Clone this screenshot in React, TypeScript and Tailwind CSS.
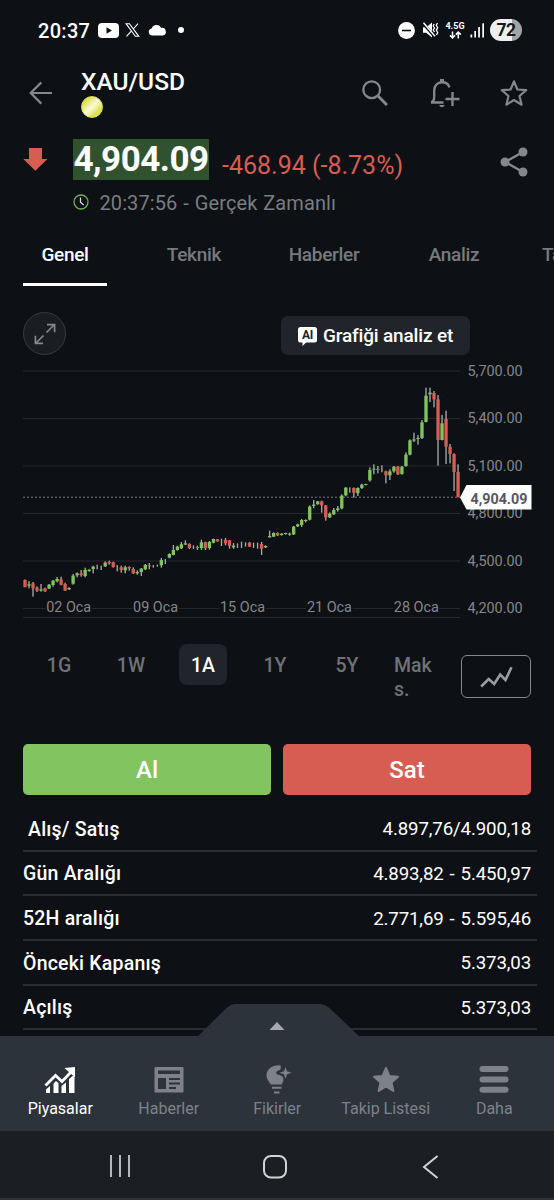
import type { ReactNode } from "react";

// g = rising, r = falling, w = no visible body
// [kind, high, bodyTop, bodyBottom, low], in thirds of a pixel from the chart top
type Candle = [string, number, number, number, number];

const candles: Candle[] = [
  ["r", 658, 660, 681, 682], ["g", 663, 673, 677, 685], ["r", 666, 670, 685, 710], ["r", 679, 683, 692, 696],
  ["g", 672, 688, 692, 695], ["r", 683, 685, 694, 696], ["g", 672, 674, 686, 687], ["g", 660, 662, 675, 680],
  ["g", 651, 657, 664, 667], ["r", 650, 658, 674, 676], ["r", 668, 672, 692, 693], ["g", 682, 684, 688, 690],
  ["g", 642, 647, 671, 674], ["g", 637, 640, 646, 652], ["r", 630, 640, 645, 650], ["g", 623, 630, 648, 652],
  ["g", 628, 629, 633, 635], ["g", 617, 620, 627, 640], ["w", 614, 0, 0, 628], ["w", 617, 0, 0, 630],
  ["g", 604, 608, 619, 621], ["r", 602, 606, 610, 614], ["r", 605, 607, 621, 623], ["w", 615, 0, 0, 634],
  ["r", 617, 622, 630, 638], ["g", 617, 622, 631, 640], ["r", 619, 621, 625, 632], ["r", 622, 627, 640, 642],
  ["g", 631, 636, 640, 644], ["g", 624, 626, 636, 648], ["g", 612, 615, 628, 630], ["r", 609, 616, 619, 628],
  ["w", 615, 0, 0, 623], ["w", 614, 0, 0, 620], ["g", 594, 600, 616, 623], ["w", 597, 0, 0, 612],
  ["g", 580, 582, 593, 595], ["g", 555, 570, 585, 586], ["g", 557, 560, 570, 572], ["g", 546, 553, 565, 567],
  ["g", 541, 550, 554, 555], ["r", 550, 552, 564, 567], ["w", 556, 0, 0, 567], ["r", 557, 561, 564, 570],
  ["g", 539, 547, 564, 570], ["r", 545, 547, 565, 570], ["g", 543, 546, 564, 569], ["g", 536, 537, 548, 550],
  ["r", 537, 538, 544, 545], ["w", 536, 0, 0, 558], ["r", 534, 540, 550, 556], ["r", 540, 541, 558, 566],
  ["g", 549, 557, 562, 566], ["w", 550, 0, 0, 564], ["w", 545, 0, 0, 564], ["w", 547, 0, 0, 560],
  ["r", 546, 548, 560, 561], ["w", 548, 0, 0, 564], ["w", 548, 0, 0, 566], ["r", 546, 552, 566, 585],
  ["g", 556, 558, 562, 564], ["g", 512, 528, 532, 533], ["g", 517, 519, 530, 531], ["r", 517, 519, 526, 528],
  ["g", 520, 521, 525, 527], ["g", 518, 519, 522, 524], ["g", 518, 521, 524, 527], ["g", 498, 500, 523, 525],
  ["g", 491, 493, 499, 501], ["g", 477, 480, 495, 501], ["g", 478, 480, 483, 487], ["g", 436, 440, 479, 481],
  ["g", 420, 434, 438, 445], ["g", 423, 424, 433, 434], ["r", 422, 424, 436, 458], ["r", 435, 436, 472, 482],
  ["g", 457, 461, 472, 474], ["g", 444, 450, 463, 465], ["g", 438, 445, 450, 455], ["g", 403, 407, 445, 448],
  ["g", 381, 383, 406, 409], ["w", 382, 0, 0, 398], ["r", 382, 384, 398, 413], ["g", 382, 384, 400, 408],
  ["g", 371, 374, 384, 387], ["g", 371, 372, 375, 376], ["g", 322, 330, 361, 365], ["g", 313, 326, 329, 343],
  ["r", 318, 327, 330, 340], ["w", 316, 0, 0, 337], ["r", 332, 334, 346, 370], ["g", 328, 334, 346, 360],
  ["g", 318, 320, 334, 338], ["r", 318, 320, 343, 345], ["g", 318, 320, 342, 344], ["g", 277, 284, 318, 320],
  ["g", 238, 241, 284, 286], ["g", 218, 238, 242, 246], ["g", 225, 234, 237, 254], ["g", 180, 187, 234, 237],
  ["g", 83, 107, 186, 187], ["g", 83, 98, 103, 126], ["r", 93, 99, 118, 142], ["r", 105, 118, 240, 317],
  ["g", 165, 190, 240, 241], ["r", 152, 177, 260, 312], ["r", 252, 260, 282, 310], ["r", 280, 282, 336, 393],
  ["r", 313, 336, 411, 412],
];

const prices = ["5,700.00", "5,400.00", "5,100.00", "4,800.00", "4,500.00", "4,200.00"];
const dates = ["02 Oca", "09 Oca", "15 Oca", "21 Oca", "28 Oca"];

const rows = [
  ["Alış/ Satış", "4.897,76/4.900,18"],
  ["Gün Aralığı", "4.893,82 - 5.450,97"],
  ["52H aralığı", "2.771,69 - 5.595,46"],
  ["Önceki Kapanış", "5.373,03"],
  ["Açılış", "5.373,03"],
];

function StatusBar() {
  return (
    <div className="flex h-[60px] shrink-0 items-center pl-[38px] pr-8 text-white">
      <span className="pt-px text-[20px] font-medium tracking-[0.3px]">20:37</span>
      <svg className="ml-2" width="21" height="15" viewBox="0 0 21 15">
        <rect width="21" height="15" rx="4" fill="#fff" />
        <path d="M8.5 4.3 14 7.5 8.5 10.7Z" fill="#0d1014" />
      </svg>
      <svg className="ml-[6px]" width="15" height="14" viewBox="0 0 15 14" fill="none" stroke="#fff" strokeWidth="1.1">
        <path d="M1 .7h3.4l9.4 12.6h-3.4Z" />
        <path d="M13 .6 8.3 6M6.3 8.2 1.5 13.4" />
      </svg>
      <svg className="ml-[8px]" width="19" height="12" viewBox="0 0 19 12">
        <path d="M4 11.5a3.6 3.6 0 0 1-.4-7.1A5.2 5.2 0 0 1 13.2 4a3.8 3.8 0 0 1 1.6 7.5Z" fill="#fff" />
      </svg>
      <span className="ml-[11px] size-[6px] rounded-full bg-white" />

      <div className="ml-auto flex items-center">
        <svg width="17" height="17" viewBox="0 0 17 17">
          <circle cx="8.5" cy="8.5" r="8.4" fill="#fff" />
          <path d="M4 8.5h9" stroke="#0d1014" strokeWidth="1.6" />
        </svg>
        <svg className="ml-[7px]" width="17" height="16" viewBox="0 0 17 16" fill="none">
          <path d="M1 5.3h3.2L10 .5v15L4.2 10.7H1Z" fill="#fff" />
          <path d="M.8 1 13 15" stroke="#0d1014" strokeWidth="3" />
          <path d="M1.5.8 13 14.2" stroke="#fff" strokeWidth="1.5" />
          <path d="M12.2 2l-1 2 1.3 2-1.3 2 1.3 2M15.5 1l-1.2 2.3 1.4 2.4-1.4 2.4 1.4 2.4-1.2 2.5" stroke="#fff" strokeWidth="1.3" />
        </svg>
        <div className="ml-[6px] flex w-[20px] flex-col items-center">
          <span className="text-[9px] leading-[9px] font-bold">4.5G</span>
          <svg width="13" height="8" viewBox="0 0 13 8" fill="none" stroke="#fff" strokeWidth="1.5">
            <path d="M3.5.5v6.3M1 4.4l2.5 2.5L6 4.4M9.3 7.5V1.2M6.8 3.6l2.5-2.5 2.5 2.5" />
          </svg>
        </div>
        <svg className="ml-[5px]" width="15" height="15" viewBox="0 0 15 15" fill="#fff">
          <rect x=".5" y="11.5" width="1.7" height="3" />
          <rect x="4.3" y="8" width="1.7" height="6.5" />
          <rect x="8.2" y="4" width="1.7" height="10.5" />
          <rect x="12.3" y=".3" width="1.7" height="14.2" />
        </svg>
        <div className="ml-[5px] flex h-[22px] w-8 items-center justify-center rounded-full bg-linear-to-r from-[#efefef] from-70% to-[#a2a4a6] to-70% text-[17.5px] font-bold tracking-[-0.5px] text-[#15181c]">
          72
        </div>
      </div>
    </div>
  );
}

function Header() {
  return (
    <div className="flex h-[66px] shrink-0 items-center pl-[29px] pr-[26px] text-[#85878a]">
      <svg width="24" height="24" viewBox="0 0 24 24" fill="none" stroke="currentColor" strokeWidth="2.2">
        <path d="M23 12H1.6M12.3 1.4 1.7 12l10.6 10.6" />
      </svg>
      <div className="ml-7 flex flex-col">
        <h1 className="text-[24.5px] leading-7 font-medium text-white">XAU/USD</h1>
        <span className="size-[22px] rounded-full border border-[#dce04a] bg-linear-to-br from-[#dfe24a] from-20% via-[#fbfbd8] via-50% to-[#dfe24a] to-75%" />
      </div>
      <svg className="ml-auto" width="26" height="26" viewBox="0 0 26 26" fill="none" stroke="currentColor">
        <circle cx="9.7" cy="9.7" r="8.4" strokeWidth="2.3" />
        <path d="M15.8 15.8 25 25" strokeWidth="3" />
      </svg>
      <svg className="ml-[42px]" width="30" height="30" viewBox="0 0 30 30" fill="none" stroke="currentColor" strokeWidth="2.4">
        <path d="M1 24.5h12.5M1.5 24.3c2.7-1.8 2.7-3.3 2.7-6.8v-5C4.2 7.5 7.5 4.3 12 4.3c3.5 0 6.5 2 7.4 5" />
        <path d="M12 1v3" strokeWidth="4" />
        <path d="M22.5 14v14M15.5 21h14" strokeWidth="2.4" />
        <path d="M9.3 27h5.2c-.4 3-4.8 3-5.2 0Z" fill="currentColor" stroke="none" />
      </svg>
      <svg className="ml-[40px]" width="28" height="28" viewBox="0 0 28 28" fill="none" stroke="currentColor" strokeWidth="2.2" strokeLinejoin="round">
        <path d="m14 2.3 3.4 8.2 8.8.7-6.7 5.8 2.1 8.7-7.6-4.7-7.6 4.7L8.5 17l-6.7-5.8 8.8-.7Z" />
      </svg>
    </div>
  );
}

function Quote() {
  return (
    <div className="shrink-0">
      <div className="flex h-[66px] items-center pl-[23px] pr-[26px]">
        <svg className="mt-0.5" width="25" height="24" viewBox="0 0 25 24">
          <path d="M6 0h13v11h5.5L12.3 22.8.3 11H6Z" fill="#d75d53" />
        </svg>
        <span className="ml-[25px] flex h-[41px] w-[136px] items-center justify-center bg-[#31522f] pt-0.5 text-[35px] font-bold tracking-[-0.5px] text-white">
          4,904.09
        </span>
        <span className="ml-[13px] pt-[13px] text-[25px] text-[#d75d53]">-468.94 (-8.73%)</span>
        <svg className="ml-auto mt-1.5" width="28" height="30" viewBox="0 0 28 30" fill="#85878a">
          <path d="M23 5 5 15l18 10" fill="none" stroke="#85878a" strokeWidth="2.4" />
          <circle cx="5" cy="15" r="4.5" />
          <circle cx="23" cy="5" r="4.5" />
          <circle cx="23" cy="25" r="4.5" />
        </svg>
      </div>
      <div className="flex h-5 items-center pl-[73px] text-[20px] leading-5 tracking-[0.1px] [word-spacing:0.8px] text-[#7a7d81]">
        <svg width="16" height="16" viewBox="0 0 16 16" fill="none">
          <circle cx="8" cy="8" r="7" stroke="#6cb04d" strokeWidth="1.3" />
          <path d="M7.5 3.5V8.3l3.2 2.7" stroke="#d6d8da" strokeWidth="1.3" />
        </svg>
        <span className="ml-[10.5px] pt-px whitespace-nowrap">20:37:56 - Gerçek Zamanlı</span>
      </div>
    </div>
  );
}

function Tabs() {
  return (
    <div className="flex h-[74px] shrink-0 overflow-hidden whitespace-nowrap text-[19px] font-medium tracking-[-0.3px] text-[#777a7e]">
      <div className="ml-[23px] flex w-[84px] shrink-0 justify-center border-b-[3px] border-white pt-[29px] text-white">Genel</div>
      <div className="ml-[22px] w-[130px] shrink-0 pt-[29px] text-center">Teknik</div>
      <div className="w-[130px] shrink-0 pt-[29px] text-center">Haberler</div>
      <div className="w-[130px] shrink-0 pt-[29px] text-center">Analiz</div>
      <div className="ml-[23px] shrink-0 pt-[29px]">Ta</div>
    </div>
  );
}

function ChartTools() {
  return (
    <div className="flex h-[74px] shrink-0 items-start pl-[23px] pt-[26px]">
      <div className="flex size-[43px] items-center justify-center rounded-full border border-[#383c41] bg-[#1a1d22]">
        <svg width="22" height="22" viewBox="0 0 22 22" fill="none" stroke="#85878a" strokeWidth="1.7">
          <path d="M12.5 9.5 20 2M13 1.7h7.6V9.3M9.5 12.5 2 20M1.4 12.7v7.6H9" />
        </svg>
      </div>
      <div className="ml-[215px] mt-1 flex h-[39px] w-[189px] items-center justify-center gap-[6px] rounded-[7px] bg-[#21252b] pt-px text-[19px] font-medium tracking-[-0.17px] text-white">
        <svg width="19" height="19" viewBox="0 0 19 19">
          <path d="M2.5 0h14A2.5 2.5 0 0 1 19 2.5v10.500a2.500 2.500 0 0 1-2.500 2.500H8L4.500 19v-3.500h-2A2.500 2.500 0 0 1 0 13V2.500A2.500 2.500 0 0 1 2.500 0Z" fill="#fff" />
          <text x="9.5" y="12" textAnchor="middle" fontSize="12" fontWeight="700" fill="#21252b">AI</text>
        </svg>
        Grafiği analiz et
      </div>
    </div>
  );
}

function Chart() {
  return (
    <svg className="block shrink-0" width="554" height="270" viewBox="0 0 554 270" fontSize="14.4">
      {prices.map((p, i) => (
        <g key={p}>
          <path d={`M23 ${11 + i * 47.5}H460`} stroke="#26292d" />
          <text x="467.5" y={15.5 + i * 47.5} fill="#85878a">{p}</text>
        </g>
      ))}
      <path d="M23 257.5H460" stroke="#26292d" />
      {dates.map((d, i) => (
        <g key={d}>
          <rect x={45.5 + i * 86.9} y="240" width="46.5" height="14" fill="#0d1014" />
          <text x={46.2 + i * 86.9} y="252.3" fill="#85878a">{d}</text>
        </g>
      ))}
      <path d="M23 137.2H460" stroke="#75787c" strokeDasharray="2 2" />
      <g transform="scale(0.33333)">
        {candles.map(([kind, high, top, bottom, low], i) => {
          const x = 75 + i * 12.03;
          return (
            <g key={i}>
              <rect x={x - 2} y={high} width="4" height={low - high} fill="#a7a9ad" />
              {kind !== "w" && (
                <rect x={x - 5} y={top} width="10" height={bottom - top} fill={kind === "g" ? "#80c45e" : "#d75d53"} />
              )}
            </g>
          );
        })}
      </g>
      <path d="M460 137.5 466.5 125H531.5v24.5H466.5Z" fill="#fff" />
      <text x="470.5" y="143.5" fontSize="14.3" fontWeight="700" fill="#55585c">4,904.09</text>
    </svg>
  );
}

function Ranges() {
  return (
    <div className="flex h-[114px] shrink-0 pl-[23px] pt-[14px] text-[19.5px] font-medium text-[#6f7276]">
      {["1G", "1W", "1A", "1Y", "5Y"].map((r) => (
        <div key={r} className="flex w-[72px] shrink-0 justify-center">
          <span
            className={`flex h-[41px] w-12 items-center justify-center rounded-[8px] pt-0.5 ${r === "1A" ? "bg-[#21252b] text-white" : ""}`}
          >
            {r}
          </span>
        </div>
      ))}
      <div className="ml-[11px] w-[48px] pt-[10px] leading-[24px]">
        Mak
        <br />
        s.
      </div>
      <div className="ml-[19px] mt-[11px] flex h-[43px] w-[70px] items-center justify-center rounded-[6px] border border-[#85878a]">
        <svg width="33" height="22" viewBox="0 0 33 22" fill="none" stroke="#9b9da0" strokeWidth="2.6">
          <path d="m1.2 20.5 7.5-7.5 5.5 5 6-9.5 5.3 5.5L31.5 1.2" />
        </svg>
      </div>
    </div>
  );
}

function Trade() {
  return (
    <div className="flex h-[51px] shrink-0 gap-3 px-[23px] text-[24px] font-medium text-white">
      <button className="flex-1 rounded-[5px] bg-[#82c560]">Al</button>
      <button className="flex-1 rounded-[5px] bg-[#d75d53]">Sat</button>
    </div>
  );
}

function Details() {
  return (
    <div className="mt-3 pl-[23px] pr-[17px]">
      {rows.map(([label, value], i) => (
        <div
          key={label}
          className="flex h-[44.7px] items-center justify-between border-b-2 border-[#2a2d32] pr-[6px] pt-0.5 text-white"
        >
          <span className={`text-[19.5px] font-medium tracking-[0.2px] ${i === 0 ? "pl-[5px]" : ""}`}>{label}</span>
          <span className="text-[18.7px] tracking-[-0.15px] [word-spacing:1.5px]">{value}</span>
        </div>
      ))}
    </div>
  );
}

function NavItem({ label, active, children }: { label: string; active?: boolean; children: ReactNode }) {
  return (
    <div className={`flex w-[108.5px] flex-col items-center pt-[28px] ${active ? "text-white" : "text-[#7d828a]"}`}>
      <svg width="32" height="32" viewBox="0 0 32 32" fill="currentColor">
        {children}
      </svg>
      <span className="mt-[3px] whitespace-nowrap text-[16px] leading-5">{label}</span>
    </div>
  );
}

function BottomNav() {
  return (
    <div className="relative flex h-[95px] shrink-0 bg-[#2d333a] pl-[6px]">
      <svg className="absolute -top-8 left-[197px]" width="163" height="33" viewBox="0 0 163 33">
        <path d="M0 33 28 5.5C32 1.5 35 0 40 0h81c5 0 9 1.5 13 5.5L163 33Z" fill="#2d333a" />
        <path d="M72.5 26 80 18l7.5 8Z" fill="#a5aab2" />
      </svg>
      <NavItem label="Piyasalar" active>
        <path d="M2 25.5l4-3.5v7H2zM9.500 19.500 12 17l2.500 2v10h-5zM17.500 22l4.500-3.500V29h-4.500zM25 15l5.500-4.500V29H25z" />
        <path d="M1.5 21.5 11.5 11.5l6.5 6L27 8" fill="none" stroke="currentColor" strokeWidth="2.8" />
        <path d="M20.5 4 31 3v10.5Z" />
      </NavItem>
      <NavItem label="Haberler">
        <path fillRule="evenodd" d="M2.5 3h27a1 1 0 0 1 1 1v23.500a1 1 0 0 1-1 1h-27a1 1 0 0 1-1-1V4a1 1 0 0 1 1-1ZM5 6.500v3.500h22V6.500ZM5 14v11h8V14ZM16 14v2h11v-2ZM16 18.500v2h11v-2ZM16 23v2h7v-2Z" />
      </NavItem>
      <NavItem label="Fikirler">
        <path d="M19.5 1.5C11.500.5 5.500 5.500 5.500 11.200c0 3.600 2 5.800 4.500 9.300h10.500c1.200-1.800 2-3.200 2-5 0-3-2.500-4-5-4.700-3-.8-3.200-3 0-4.300 2.500-1 3-2.500 2-5Z" />
        <path d="M24.5 3 26 7.3l4.500 1.500L26 10.300l-1.500 4.500L23 10.300l-4.500-1.500L23 7.300Z" />
        <path d="M11 22.8h9.5v1.900H11zM13 27.500h5.500v2H13z" />
      </NavItem>
      <NavItem label="Takip Listesi">
        <path
          d="m16 4 3.4 8 8.6.8-6.5 5.7 1.9 8.5-7.4-4.5L8.6 27l1.9-8.5L4 12.8l8.6-.8Z"
          stroke="currentColor"
          strokeWidth="2"
          strokeLinejoin="round"
        />
      </NavItem>
      <NavItem label="Daha">
        <rect x="1.5" y="2" width="29" height="6" rx="3" />
        <rect x="1.5" y="12.5" width="29" height="6" rx="3" />
        <rect x="1.5" y="22.8" width="29" height="6" rx="3" />
      </NavItem>
    </div>
  );
}

function SystemBar() {
  return (
    <div className="flex h-[69px] shrink-0 items-start border-b-2 border-[#2d333a] bg-[#1b1e23] pl-[109px] pt-[24px]">
      <svg width="22" height="22" viewBox="0 0 22 22" stroke="#b4b6b9" strokeWidth="2">
        <path d="M2 0v22M11 0v22M20 0v22" />
      </svg>
      <svg className="ml-[132px]" width="24" height="24" viewBox="0 0 24 24" fill="none" stroke="#d2d3d5" strokeWidth="2">
        <rect x="1" y="1" width="22" height="21.5" rx="7" />
      </svg>
      <svg className="ml-[135px]" width="17" height="24" viewBox="0 0 17 24" fill="none" stroke="#d2d3d5" strokeWidth="2">
        <path d="M15.5 1 2 12l13.5 11" />
      </svg>
    </div>
  );
}

export default function App() {
  return (
    <div className="flex h-[1200px] w-[554px] flex-col overflow-hidden bg-[#0d1014] font-[Roboto,sans-serif]">
      <div className="flex min-h-0 flex-1 flex-col overflow-hidden">
        <StatusBar />
        <Header />
        <Quote />
        <Tabs />
        <ChartTools />
        <Chart />
        <Ranges />
        <Trade />
        <Details />
      </div>
      <BottomNav />
      <SystemBar />
    </div>
  );
}
